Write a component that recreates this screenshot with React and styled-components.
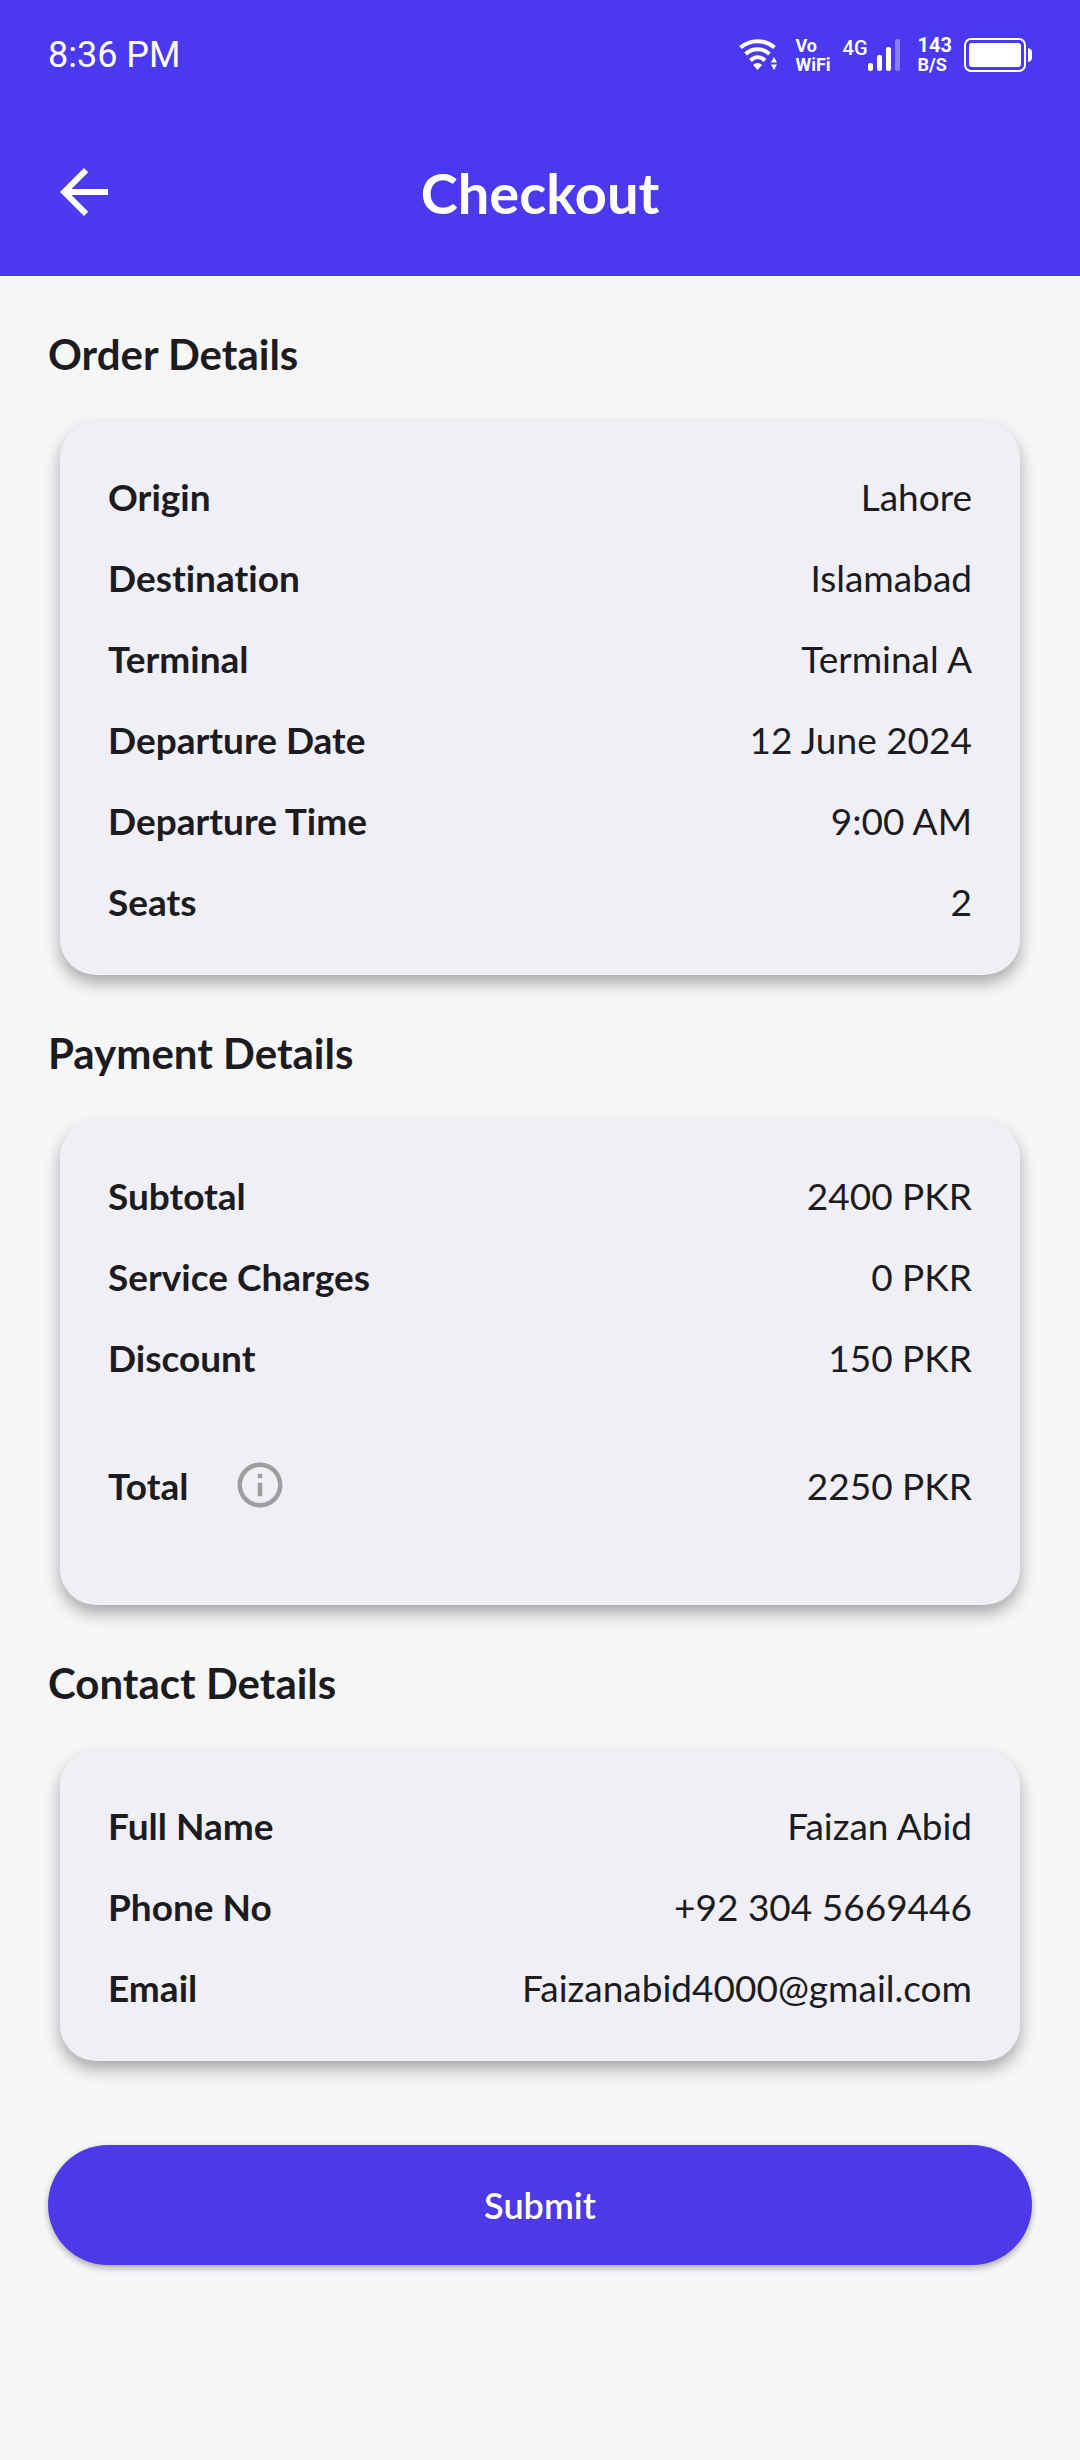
import React from "react";
import styled, { createGlobalStyle } from "styled-components";

const GlobalStyle = createGlobalStyle`
  * { box-sizing: border-box; }
  body {
    margin: 0;
    background: #f6f6f6;
    color: #1c1b1f;
    font-family: Lato, "Open Sans", sans-serif;
    font-variant-ligatures: none;
  }
`;

const Page = styled.div`
  min-height: 100vh;
  background: #f6f6f6;
`;

const Header = styled.header`
  background: #4b39ef;
  color: #fff;
`;

const StatusBar = styled.div`
  display: flex;
  align-items: center;
  justify-content: space-between;
  height: 108px;
  padding: 2px 48px 0;
  font-family: Roboto, sans-serif;
`;

const Clock = styled.time`
  font-size: 36px;
  line-height: 44px;
`;

const StatusIcons = styled.div`
  display: flex;
  align-items: center;
`;

const StackedText = styled.span`
  display: flex;
  flex-direction: column;
  margin-left: 18px;
  font-size: 18px;
  font-weight: 700;
  line-height: 19px;
`;

const StackTop = styled.span`
  font-size: 20px;
`;

const Network = styled.span`
  display: flex;
  align-items: flex-start;
  margin-left: 12px;
  font-size: 20px;
  font-weight: 500;
  line-height: 18px;
`;

const Battery = styled.svg`
  margin-left: 12px;
`;

const AppBar = styled.div`
  display: grid;
  grid-template-columns: 72px 1fr 72px;
  align-items: center;
  height: 168px;
  padding: 0 48px;
`;

const BackButton = styled.button`
  display: flex;
  padding: 0;
  border: 0;
  background: none;
  color: inherit;
  cursor: pointer;
`;

const Title = styled.h1`
  margin: 0;
  padding-top: 2px;
  text-align: center;
  font-size: 56px;
  font-weight: 700;
  line-height: 72px;
`;

const Form = styled.form`
  padding: 0 48px 48px;
`;

const SectionTitle = styled.h2`
  margin: 0;
  padding: 50px 0 40px;
  font-size: 42px;
  font-weight: 700;
  line-height: 56px;
`;

const Card = styled.dl`
  margin: 0 12px;
  padding: 34px 48px 33px;
  border-radius: 36px;
  background: #f0eff5;
  box-shadow: 0 8px 16px rgba(0, 0, 0, 0.32);
`;

const Row = styled.div`
  display: flex;
  align-items: center;
  justify-content: space-between;
  padding: 15px 0;
  line-height: 51px;
`;

const Label = styled.dt`
  display: flex;
  align-items: center;
  font-size: 37px;
  font-weight: 700;
`;

const Value = styled.dd`
  margin: 0;
  font-size: 37px;
  text-align: right;
`;

const InfoButton = styled.button`
  display: flex;
  align-items: center;
  justify-content: center;
  width: 144px;
  height: 144px;
  padding: 0;
  border: 0;
  background: none;
  color: #9e9e9e;
  cursor: pointer;
`;

const SubmitButton = styled.button`
  display: block;
  width: 100%;
  height: 120px;
  margin-top: 84px;
  border: 0;
  border-radius: 60px;
  background: #4e39e9;
  color: #fff;
  font-family: inherit;
  font-size: 36px;
  font-weight: 600;
  box-shadow: 0 3px 6px rgba(0, 0, 0, 0.3);
  cursor: pointer;
`;

const WifiIcon = () => (
  <svg width="38" height="32" viewBox="0 0 38 32" fill="none" aria-hidden="true">
    <g stroke="#fff" strokeWidth="4">
      <path d="M1.5 8.5C11.500 0 25.500 0 35.500 8.500" />
      <path d="M6.500 15C13.500 8.500 23.500 8.500 30.500 15" />
      <path d="M11.500 21.500C16 17 21.500 17 26 21.500" />
    </g>
    <path d="M14 26q4.500-4 9 0l-4.500 5z" fill="#fff" />
    <path d="M35 18l3 5.500h-6zM35 31l3-5.500h-6z" fill="#fff" />
  </svg>
);

const SignalIcon = () => (
  <svg width="32" height="32" viewBox="0 0 32 32" fill="#fff" aria-hidden="true">
    <rect x="0" y="24" width="5" height="8" rx="2" />
    <rect x="9" y="16" width="5" height="16" rx="2" />
    <rect x="18" y="8" width="5" height="24" rx="2" />
    <rect x="27" y="0" width="5" height="32" rx="2" opacity="0.35" />
  </svg>
);

const BatteryIcon = () => (
  <Battery width="68" height="34" viewBox="0 0 68 34" aria-hidden="true">
    <rect x="1" y="1" width="60" height="32" rx="6" fill="none" stroke="#fff" strokeWidth="2" />
    <rect x="5" y="5" width="52" height="24" rx="3" fill="#fff" />
    <path d="M64 10q4 1 4 4v6q0 3-4 4z" fill="#fff" />
  </Battery>
);

const BackIcon = () => (
  <svg width="72" height="72" viewBox="0 0 24 24" fill="currentColor" aria-hidden="true">
    <path d="M20 11H7.830l5.590-5.590L12 4l-8 8 8 8 1.410-1.410L7.830 13H20v-2z" />
  </svg>
);

const InfoIcon = () => (
  <svg width="54" height="54" viewBox="0 0 24 24" fill="currentColor" aria-hidden="true">
    <path d="M11 7h2v2h-2zm0 4h2v6h-2zm1-9C6.480 2 2 6.480 2 12s4.480 10 10 10 10-4.480 10-10S17.520 2 12 2zm0 18c-4.410 0-8-3.590-8-8s3.590-8 8-8 8 3.590 8 8-3.590 8-8 8z" />
  </svg>
);

const sections = [
  {
    title: "Order Details",
    rows: [
      { label: "Origin", value: "Lahore" },
      { label: "Destination", value: "Islamabad" },
      { label: "Terminal", value: "Terminal A" },
      { label: "Departure Date", value: "12 June 2024" },
      { label: "Departure Time", value: "9:00 AM" },
      { label: "Seats", value: "2" },
    ],
  },
  {
    title: "Payment Details",
    rows: [
      { label: "Subtotal", value: "2400 PKR" },
      { label: "Service Charges", value: "0 PKR" },
      { label: "Discount", value: "150 PKR" },
      { label: "Total", value: "2250 PKR", info: true },
    ],
  },
  {
    title: "Contact Details",
    rows: [
      { label: "Full Name", value: "Faizan Abid" },
      { label: "Phone No", value: "+92 304 5669446" },
      { label: "Email", value: "Faizanabid4000@gmail.com" },
    ],
  },
];

export default function App() {
  return (
    <Page>
      <GlobalStyle />
      <Header>
        <StatusBar>
          <Clock>8:36 PM</Clock>
          <StatusIcons>
            <WifiIcon />
            <StackedText>
              <span>Vo</span>
              <span>WiFi</span>
            </StackedText>
            <Network>
              <span>4G</span>
              <SignalIcon />
            </Network>
            <StackedText>
              <StackTop>143</StackTop>
              <span>B/S</span>
            </StackedText>
            <BatteryIcon />
          </StatusIcons>
        </StatusBar>
        <AppBar>
          <BackButton type="button" aria-label="Back">
            <BackIcon />
          </BackButton>
          <Title>Checkout</Title>
        </AppBar>
      </Header>
      <Form onSubmit={(e) => e.preventDefault()}>
        {sections.map((section) => (
          <section key={section.title}>
            <SectionTitle>{section.title}</SectionTitle>
            <Card>
              {section.rows.map((row) => (
                <Row key={row.label}>
                  <Label>
                    {row.label}
                    {row.info && (
                      <InfoButton type="button" aria-label="About the total">
                        <InfoIcon />
                      </InfoButton>
                    )}
                  </Label>
                  <Value>{row.value}</Value>
                </Row>
              ))}
            </Card>
          </section>
        ))}
        <SubmitButton type="submit">Submit</SubmitButton>
      </Form>
    </Page>
  );
}
